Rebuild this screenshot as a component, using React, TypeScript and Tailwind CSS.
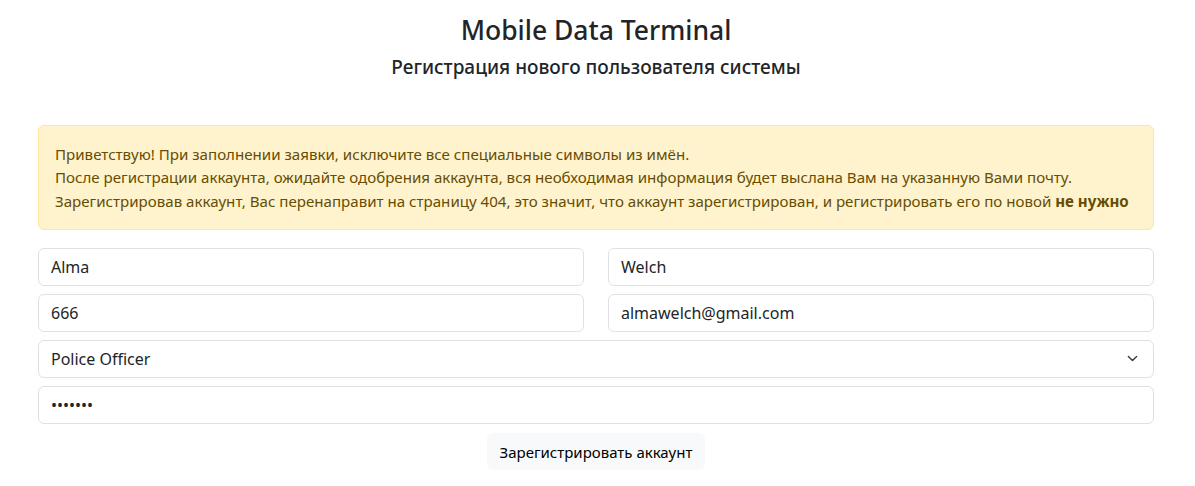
import { useState } from 'react';

const inputCls =
  'block h-[38px] w-full rounded-[6px] border border-[#dee2e6] bg-white px-3 text-[16px] text-[#212529] outline-none';

function App() {
  const [role, setRole] = useState('Police Officer');

  return (
    <div
      className="min-h-[486px] bg-white text-[#212529]"
      style={{ fontFamily: '"Noto Sans", "Open Sans", sans-serif' }}
    >
      <div className="ml-[38px] w-[1116px] pt-[15px]">
        <h3 className="mb-2 text-center text-[26.5px] leading-[1.2] font-medium">
          Mobile Data Terminal
        </h3>
        <h5 className="text-center text-[19px] leading-[24px] font-medium">
          Регистрация нового пользователя системы
        </h5>

        {/* предупреждение */}
        <div className="mt-[46px] mb-[18px] rounded-[6px] border border-[#ffe69c] bg-[#fff3cd] px-4 pt-[17px] pb-[16px] text-[15.1px] leading-[23.5px] text-[#664d03]">
          Приветствую! При заполнении заявки, исключите все специальные символы из имён.
          <br />
          После регистрации аккаунта, ожидайте одобрения аккаунта, вся необходимая информация будет
          выслана Вам на указанную Вами почту.
          <br />
          Зарегистрировав аккаунт, Вас перенаправит на страницу 404, это значит, что аккаунт
          зарегистрирован, и регистрировать его по новой <b>не нужно</b>
        </div>

        <form className="flex flex-col gap-2" onSubmit={(e) => e.preventDefault()}>
          <div className="grid grid-cols-2 gap-x-6 gap-y-2">
            <input className={inputCls} defaultValue="Alma" />
            <input className={inputCls} defaultValue="Welch" />
            <input className={inputCls} defaultValue="666" />
            <input className={inputCls} defaultValue="almawelch@gmail.com" />
          </div>
          <div className="relative">
            <select
              className={`${inputCls} appearance-none pr-9`}
              value={role}
              onChange={(e) => setRole(e.target.value)}
            >
              <option>Police Officer</option>
              <option>Dispatcher</option>
            </select>
            <svg
              className="pointer-events-none absolute top-[13px] right-[14px]"
              width="15"
              height="11"
              viewBox="0 0 16 16"
            >
              <path
                d="m2 5 6 6 6-6"
                fill="none"
                stroke="#343a40"
                strokeWidth="2"
                strokeLinecap="round"
                strokeLinejoin="round"
              />
            </svg>
          </div>
          <input className={inputCls} type="password" defaultValue="1234567" />
          <div className="flex justify-center pt-[1px]">
            <button
              type="submit"
              className="h-[37px] rounded-[6px] bg-[#f8f9fa] px-[13px] text-[15px] text-black"
            >
              Зарегистрировать аккаунт
            </button>
          </div>
        </form>
      </div>
    </div>
  );
}

export default App;
